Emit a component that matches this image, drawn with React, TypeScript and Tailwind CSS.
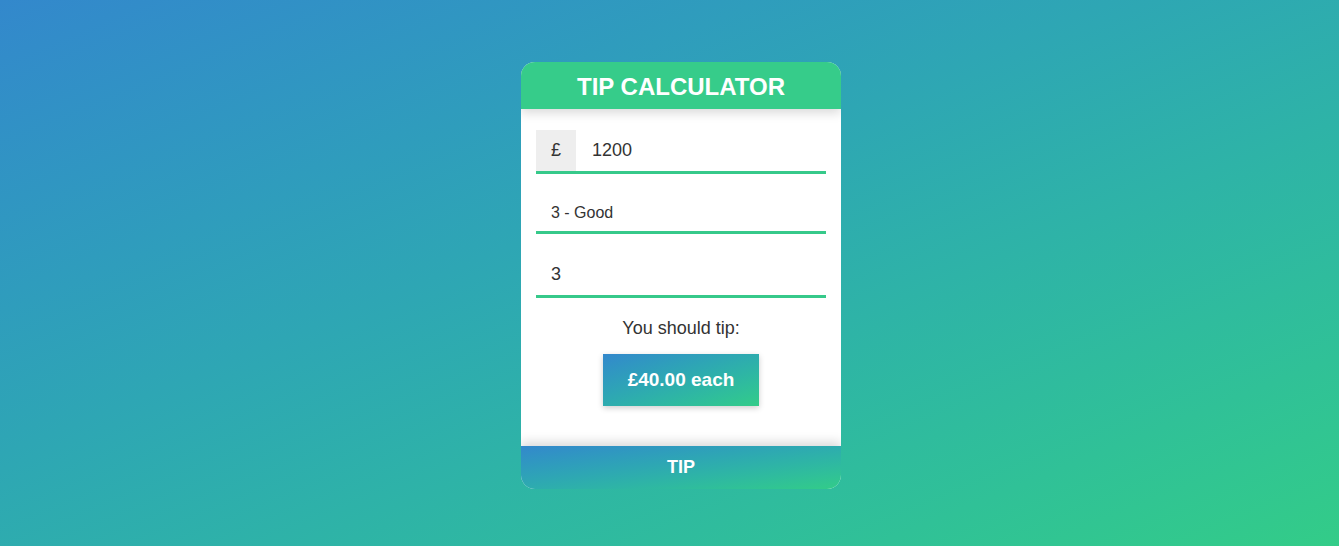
export default function App() {
  return (
    <div
      className="flex min-h-[546px] w-full justify-center bg-gradient-to-br from-[#3388cc] to-[#33cc88] pl-[23px] pt-[62px]"
      style={{ fontFamily: '"Liberation Sans", Arial, sans-serif' }}
    >
      <div className="flex h-[427px] w-[320px] flex-col overflow-hidden rounded-[14px] bg-white">
        <div className="relative z-10 flex h-[47px] shrink-0 items-center justify-center bg-[#36cc8a] pt-[3px] shadow-[0_4px_10px_rgba(0,0,0,0.15)]">
          <h1 className="text-[24px] font-bold text-white">TIP CALCULATOR</h1>
        </div>

        <div className="flex flex-1 flex-col px-[15px] pt-[21px]">
          <div className="flex h-[44px] border-b-[3px] border-[#36c98a]">
            <span className="flex w-[40px] items-center justify-center bg-[#eeeeee] text-[18px] text-[#333]">£</span>
            <input
              defaultValue="1200"
              className="min-w-0 flex-1 bg-transparent pl-[16px] text-[18px] text-[#333] outline-none"
            />
          </div>

          <div className="mt-[16px] flex h-[44px] items-center border-b-[3px] border-[#36c98a] pl-[15px] pt-[4px] text-[16px] text-[#333]">
            3 - Good
          </div>

          <div className="mt-[20px] flex h-[44px] border-b-[3px] border-[#36c98a]">
            <input
              defaultValue="3"
              className="min-w-0 flex-1 bg-transparent pl-[15px] text-[18px] text-[#333] outline-none"
            />
          </div>

          <p className="mt-[19px] text-center text-[18px] leading-[22px] text-[#333]">You should tip:</p>

          <div className="mt-[15px] flex justify-center">
            <div className="flex h-[52px] w-[156px] items-center justify-center bg-gradient-to-br from-[#3388cc] to-[#33cc88] text-[19px] font-bold text-white shadow-[0_2px_6px_rgba(0,0,0,0.2)]">
              £40.00 each
            </div>
          </div>
        </div>

        <button className="relative z-10 flex h-[43px] shrink-0 items-center justify-center bg-gradient-to-br from-[#3388cc] to-[#33cc88] text-[18px] font-bold text-white shadow-[0_-4px_10px_rgba(0,0,0,0.15)]">
          TIP
        </button>
      </div>
    </div>
  );
}
